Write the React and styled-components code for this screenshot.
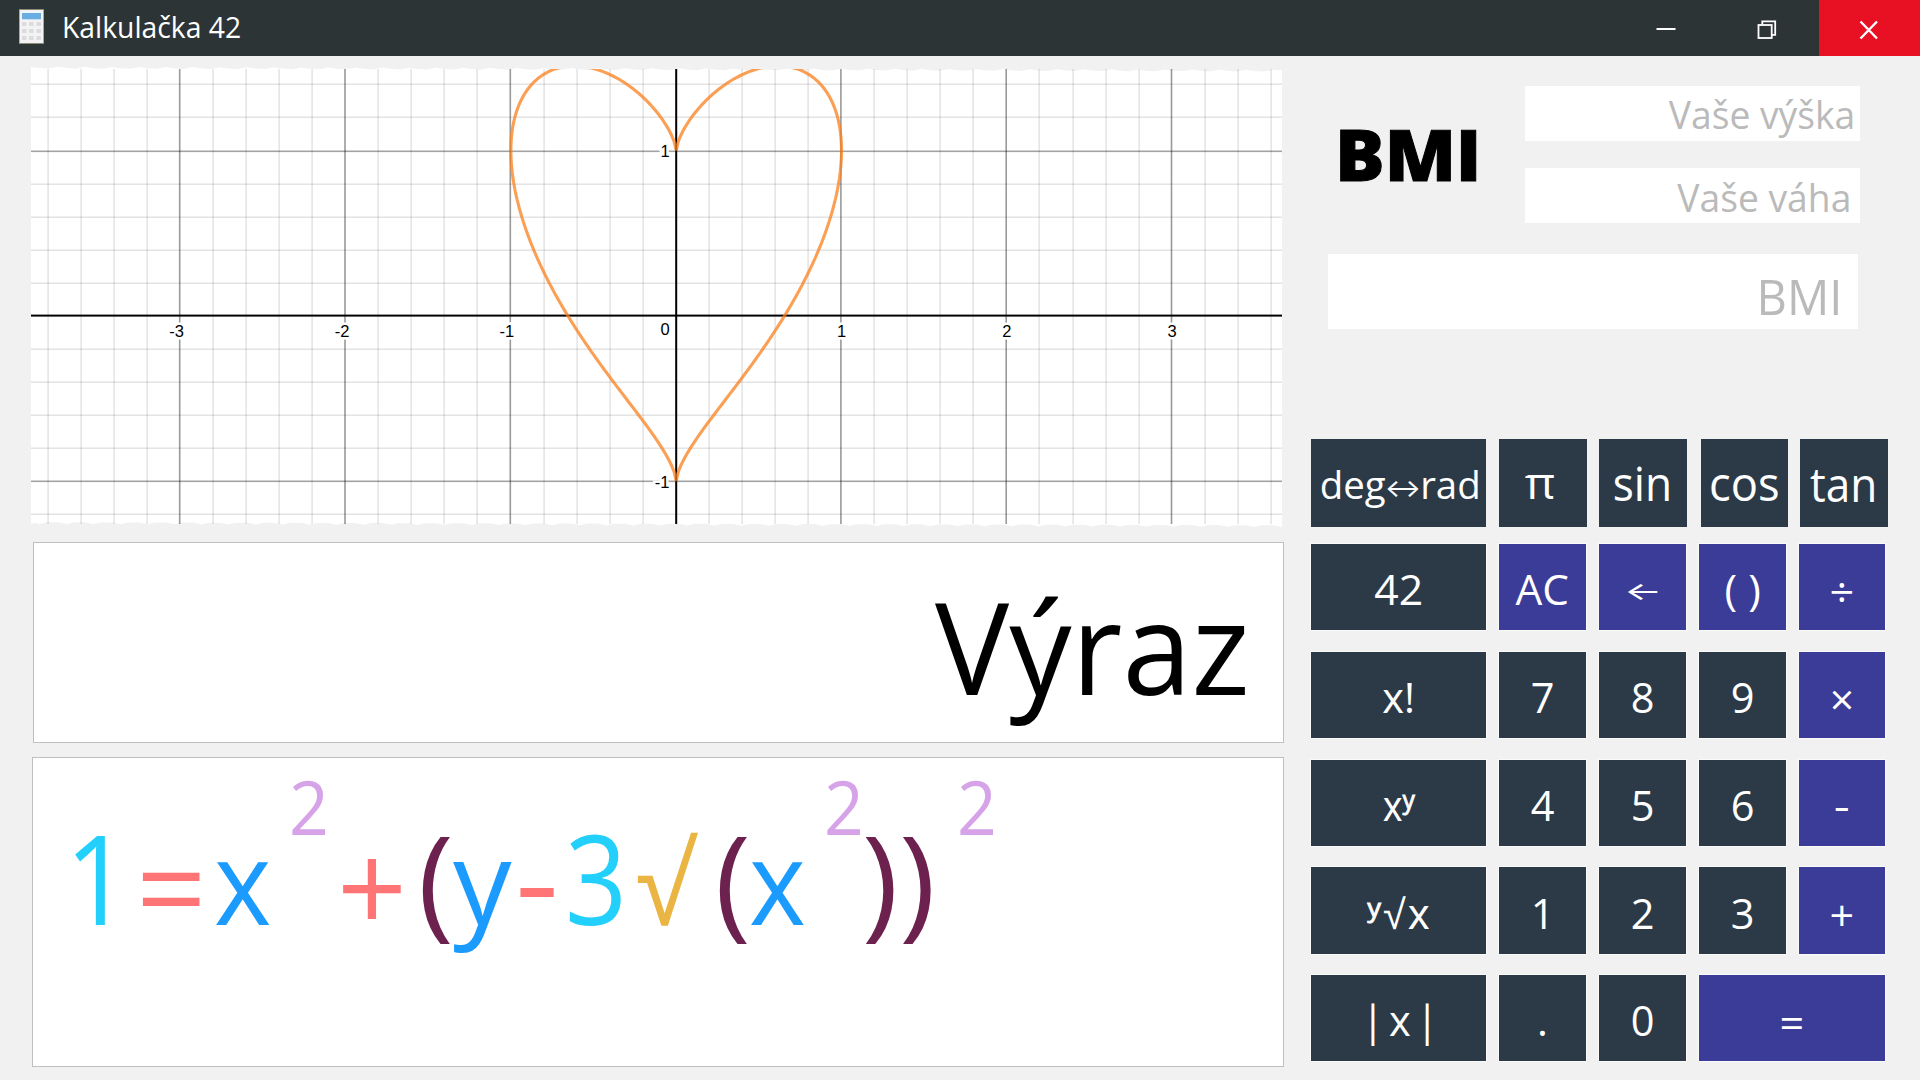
import React from "react";
import styled, { createGlobalStyle, css } from "styled-components";

const GlobalStyle = createGlobalStyle`
  * { box-sizing: border-box; }
  body {
    margin: 0;
    background: #f1f1f1;
    font-family: "Open Sans", "Noto Sans", sans-serif;
  }
`;

const Window = styled.div`
  width: 1920px;
  height: 1080px;
  display: flex;
  flex-direction: column;
  overflow: hidden;
  background: #f1f1f1;
`;

/* ---------- title bar ---------- */

const TitleBar = styled.header`
  flex: none;
  height: 56px;
  display: flex;
  align-items: stretch;
  background: #2d3436;
  color: #fff;
`;

const AppIcon = styled.svg`
  width: 26px;
  height: 36px;
  margin: 8px 16.5px 0 19px;
`;

const Title = styled.h1`
  margin: 0;
  flex: 1;
  font-size: 29px;
  font-weight: 400;
  line-height: 53px;
  white-space: nowrap;
  span {
    display: inline-block;
    transform: scaleX(0.976);
    transform-origin: left;
  }
`;

const WindowButton = styled.button`
  width: 101px;
  padding: 0;
  border: 0;
  display: grid;
  place-items: center;
  color: #fff;
  background: ${(p) => (p.$danger ? "#e81123" : "transparent")};

  svg {
    display: block;
    margin: 3px ${(p) => (p.$danger ? 1 : 3)}px 0 0;
  }
`;

/* ---------- layout ---------- */

const Body = styled.main`
  flex: 1;
  display: flex;
  align-items: flex-start;
  gap: 27px;
`;

const Workspace = styled.section`
  width: 1284px;
  padding: 10px 0 0 32px;
  display: flex;
  flex-direction: column;
  gap: 14px;
`;

const Panel = styled.aside`
  width: 577px;
  padding-top: 30px;
  display: flex;
  flex-direction: column;
`;

/* ---------- graph ---------- */

const GraphSvg = styled.svg`
  display: block;
  width: 1251px;
  height: 462px;
  margin-left: -1px;

  text {
    font-family: "Liberation Sans", Arial, sans-serif;
    font-size: 16.5px;
    fill: #000;
    stroke: #fff;
    stroke-width: 5px;
    paint-order: stroke;
  }
`;

/* ---------- displays ---------- */

const Display = styled.div`
  border: 1px solid #bfbfbf;
  background: #fff;
  display: flex;
  height: ${(p) => p.$height}px;
`;

const InputDisplay = styled(Display)`
  margin-left: 1px;
  padding: 39px 33px 0 0;
  justify-content: flex-end;
  align-items: flex-start;
`;

const InputText = styled.span`
  font-size: 128px;
  line-height: 128px;
  color: #000;
  transform: scaleX(0.972);
  transform-origin: right;
`;

const FormulaDisplay = styled(Display)`
  padding: 56px 0 0 31.5px;
  align-items: baseline;
`;

const tokenKinds = {
  number: css`color: #22d0fb; font-size: 125px;`,
  variable: css`color: #1c9bff; font-size: 118px;`,
  operator: css`color: #ff7575; font-size: 125px;`,
  paren: css`color: #6d214f; font-size: 123px;`,
  root: css`color: #eab543; font-size: 112px;`,
  power: css`color: #d6a2e8; font-size: 75px;`,
};

const Token = styled.span`
  flex: none;
  width: ${(p) => p.$width}px;
  line-height: 1;
  white-space: nowrap;
  ${(p) => tokenKinds[p.$kind]}
  transform: translateY(${(p) => p.$shift || 0}px) scaleX(${(p) => p.$stretch});
  transform-origin: left;
`;

/* ---------- BMI ---------- */

const BmiForm = styled.div`
  display: flex;
  justify-content: space-between;
  width: 549px;
  height: 137px;
`;

const BmiHeading = styled.h2`
  margin: 32px 0 0 23.5px;
  font-size: 71.4px;
  line-height: 72px;
  font-weight: 800;
  color: #000;
  transform: scaleX(1.032);
  transform-origin: left;
  -webkit-text-stroke: 1px #000;
`;

const BmiFields = styled.div`
  display: flex;
  flex-direction: column;
  gap: 27px;
`;

const Field = styled.div`
  width: 335px;
  height: 55px;
  padding-right: ${(p) => p.$inset}px;
  background: #fff;
  color: #bababa;
  font-size: 38.8px;
  line-height: 55px;
  text-align: right;
`;

const FieldText = styled.span`
  display: inline-block;
  transform: scaleX(0.96) translateY(${(p) => p.$shift || 0}px);
  transform-origin: right;
`;

const BmiResult = styled(Field)`
  width: 530px;
  height: 75px;
  margin: 31px 0 0 17px;
  font-size: 49px;
  line-height: 75px;
`;

/* ---------- keypad ---------- */

const FunctionRow = styled.div`
  margin-top: 110px;
  height: 88px;
  display: grid;
  grid-template-columns: 188px 100px 102px 99px 88px;
`;

const KeyGrid = styled.div`
  margin-top: 17px;
  display: grid;
  grid-template-columns: 175px 87px 87px 87px 86px;
  grid-auto-rows: 86.3px;
  column-gap: 13px;
  row-gap: 21.5px;
`;

const Key = styled.button`
  grid-column: span ${(p) => p.$span || 1};
  padding: 6px 0 0;
  border: 0;
  display: flex;
  justify-content: center;
  align-items: center;
  background: ${(p) => (p.$accent ? "#3b3b98" : "#2c3a47")};
  box-shadow: 0 0 0 1px #fafafa;
  color: #fff;
  font-family: inherit;
  font-size: 41.5px;
  line-height: 1.3;
  white-space: pre;
`;

const FunctionKey = styled(Key)`
  width: ${(p) => p.$width}px;
  padding-top: 2px;
  box-shadow: none;
  font-size: ${(p) => p.$size}px;
`;

const KeyLabel = styled.span`
  display: inline-block;
  transform: translate(${(p) => p.$x || 0}px, ${(p) => p.$y || 0}px)
    scaleX(${(p) => p.$stretch || 1});
  letter-spacing: ${(p) => p.$spacing || 0}px;
  font-family: ${(p) => p.$font || "inherit"};
`;

const Exponent = styled.span`
  -webkit-text-stroke: 0.8px #fff;
`;

const Arrow = styled.span`
  display: inline-flex;
  justify-content: center;
  width: ${(p) => p.$width}px;
  font-family: "Inter", sans-serif;
  font-weight: 400;
  font-size: ${(p) => p.$size}px;
  line-height: 1;
  transform: scaleX(${(p) => p.$stretch}) translateY(${(p) => p.$y || 0}px);
`;

/* ---------- data ---------- */

const formula = [
  ["1", "number", 71.3, 0.907],
  ["=", "operator", 78.6, 0.987, 7.5],
  ["x", "variable", 74.6, 0.93],
  ["2", "power", 47.8, 0.93, -90],
  ["+", "operator", 80.8, 0.98, 8],
  ["(", "paren", 35.4, 0.98],
  ["y", "variable", 62.3, 0.99],
  ["-", "operator", 49.6, 1.095, 1],
  ["3", "number", 71.1, 0.868],
  ["√", "root", 78.8, 0.935],
  ["(", "paren", 34.5, 0.98],
  ["x", "variable", 74.7, 0.92],
  ["2", "power", 38, 0.93, -90],
  [")", "paren", 37.4, 1],
  [")", "paren", 57.6, 1],
  ["2", "power", 40, 0.93, -90],
];

const keys = [
  { label: "42", stretch: 1.03 },
  { label: "AC", accent: true, stretch: 1.02 },
  { label: "←", accent: true, arrow: true, y: -5 },
  { label: "( )", accent: true, stretch: 1.03 },
  { label: "÷", accent: true, y: 1.5, stretch: 1.04 },
  { label: "x!" },
  { label: "7" },
  { label: "8" },
  { label: "9" },
  { label: "×", accent: true, y: 2, stretch: 1.03 },
  { label: "x", exponentAfter: "ʸ", stretch: 0.9, font: '"Noto Sans", sans-serif' },
  { label: "4" },
  { label: "5" },
  { label: "6" },
  { label: "-", accent: true, stretch: 1.2 },
  { label: "√x", exponentBefore: "ʸ", spacing: 2, x: 1, font: '"Noto Sans", sans-serif' },
  { label: "1" },
  { label: "2" },
  { label: "3" },
  { label: "+", accent: true, y: 1.5, stretch: 1.04 },
  { label: "| x |", spacing: -3 },
  { label: "." },
  { label: "0" },
  { label: "=", accent: true, span: 2, y: 1.5, stretch: 1.04 },
];

/* ---------- plot geometry ---------- */

const OX = 645.2;
const OY = 249.7;
const UX = 165.3;
const UY = 165.2;
const W = 1251;
const H = 462;

const px = (x) => OX + x * UX;
const py = (y) => OY - y * UY;

function paperOutline() {
  const step = 27;
  let d = "M0 1";
  for (let x = 0; x < W; x += step) {
    const base = 2 + (x / W) * 3;
    const end = Math.min(x + step, W);
    d += ` L${x + 8} ${base} L${end - 9} ${base + 0.6} L${end} ${base - 1.2}`;
  }
  d += ` L${W} 462`;
  for (let x = W; x > 0; x -= step) {
    const base = 457 + (x / W) * 3;
    const end = Math.max(x - step, 0);
    d += ` L${x} ${base + 1} L${x - 9} ${base - 0.8} L${end + 7} ${base - 0.8} L${end} ${base + 0.8}`;
  }
  return d + "Z";
}

function heartPath() {
  const n = 240;
  const upper = [];
  const lower = [];
  for (let i = 0; i <= n; i += 1) {
    const x = Math.sin(-Math.PI / 2 + (Math.PI * i) / n);
    const root = Math.cbrt(x * x);
    const arc = Math.sqrt(Math.max(0, 1 - x * x));
    upper.push(`${px(x).toFixed(2)} ${py(root + arc).toFixed(2)}`);
    lower.push(`${px(x).toFixed(2)} ${py(root - arc).toFixed(2)}`);
  }
  return `M${upper.join("L")}L${lower.reverse().join("L")}Z`;
}

const range = (from, to) =>
  Array.from({ length: to - from + 1 }, (_, i) => from + i);

function Graph() {
  return (
    <GraphSvg viewBox={`0 0 ${W} ${H}`}>
      <defs>
        <clipPath id="plot">
          <rect x="0" y="3" width={W} height="455" />
        </clipPath>
      </defs>
      <path d={paperOutline()} fill="#fff" />
      <g clipPath="url(#plot)">
        {range(-19, 18).filter((i) => i % 5).map((i) => (
          <rect
            key={`v${i}`}
            x={Math.round(px(i / 5) - 0.4) - 0.6}
            y="0"
            width="1.4"
            height={H}
            fill="#000"
            opacity="0.12"
          />
        ))}
        {range(-7, 7).filter((i) => i % 5).map((i) => (
          <rect
            key={`h${i}`}
            x="0"
            y={Math.round(py(i / 5)) - 0.5}
            width={W}
            height="1.4"
            fill="#000"
            opacity="0.12"
          />
        ))}
        {[-3, -2, -1, 1, 2, 3].map((i) => (
          <rect
            key={`m${i}`}
            x={px(i) - 1.4}
            y="0"
            width="1.6"
            height={H}
            fill="#000"
            opacity="0.4"
          />
        ))}
        {[-1, 1].map((i) => (
          <rect
            key={`n${i}`}
            x="0"
            y={Math.round(py(i)) - 0.5}
            width={W}
            height="1.6"
            fill="#000"
            opacity="0.36"
          />
        ))}
        <rect x="0" y="248.6" width={W} height="2" fill="#000" />
      </g>
      <g textAnchor="middle">
        <text x="145.7" y="271.3">-3</text>
        <text x="311" y="271.3">-2</text>
        <text x="475.8" y="271.3">-1</text>
        <text x="810.5" y="271.3">1</text>
        <text x="975.8" y="271.3">2</text>
        <text x="1141.2" y="271.3">3</text>
        <text x="634" y="269">0</text>
        <text x="634" y="91">1</text>
        <text x="631" y="422">-1</text>
      </g>
      <rect x="644.2" y="3" width="2" height="455" fill="#000" />
      <path
        d={heartPath()}
        clipPath="url(#plot)"
        fill="none"
        stroke="#fa7e19"
        strokeOpacity="0.74"
        strokeWidth="3.1"
        strokeLinejoin="bevel"
      />
    </GraphSvg>
  );
}

function CalculatorIcon() {
  return (
    <AppIcon viewBox="0 0 26 36">
      <rect x="0" y="1" width="25" height="35" fill="#8b8b76" />
      <rect x="0.7" y="2" width="23.6" height="33" fill="#f3f3f6" />
      <rect x="3" y="5" width="19" height="6.3" fill="#6aade0" />
      {[14, 21, 28].map((y) =>
        [3, 10, 17.5].map((x) => (
          <rect key={`${x}-${y}`} x={x} y={y} width="4.5" height="4" fill="#dcdcdc" />
        ))
      )}
    </AppIcon>
  );
}

export default function App() {
  return (
    <>
      <GlobalStyle />
      <Window>
        <TitleBar>
          <CalculatorIcon />
          <Title><span>Kalkulačka 42</span></Title>
          <WindowButton>
            <svg width="20" height="20" viewBox="0 0 20 20">
              <rect x="0.5" y="8" width="19" height="2" fill="#fff" />
            </svg>
          </WindowButton>
          <WindowButton>
            <svg width="20" height="20" viewBox="0 0 20 20" fill="none" stroke="#fff" strokeWidth="1.8">
              <path d="M5.3 4.5V1.4H18.2V14.8H15" />
              <rect x="1.5" y="5" width="13.2" height="13" />
            </svg>
          </WindowButton>
          <WindowButton $danger>
            <svg width="20" height="20" viewBox="0 0 20 20" fill="none" stroke="#fff" strokeWidth="2.4">
              <path d="M1.5 1.5L18 18.5M18 1.5L1.5 18.5" />
            </svg>
          </WindowButton>
        </TitleBar>

        <Body>
          <Workspace>
            <Graph />
            <InputDisplay $height={201}>
              <InputText>Výraz</InputText>
            </InputDisplay>
            <FormulaDisplay $height={310}>
              {formula.map(([text, kind, width, stretch, shift], i) => (
                <Token key={i} $kind={kind} $width={width} $stretch={stretch} $shift={shift}>
                  {text}
                </Token>
              ))}
            </FormulaDisplay>
          </Workspace>

          <Panel>
            <BmiForm>
              <BmiHeading>BMI</BmiHeading>
              <BmiFields>
                <Field $inset={5}>
                  <FieldText $shift={1}>Vaše výška</FieldText>
                </Field>
                <Field $inset={9}>
                  <FieldText $shift={2}>Vaše váha</FieldText>
                </Field>
              </BmiFields>
            </BmiForm>
            <BmiResult $inset={16}>
              <FieldText $shift={5}>BMI</FieldText>
            </BmiResult>

            <FunctionRow>
              <FunctionKey $width={175} $size={39}>
                <KeyLabel $x={1.5} $stretch={0.985}>
                  deg<Arrow $width={35} $size={25} $stretch={1.1} $y={-2}>↔</Arrow>rad
                </KeyLabel>
              </FunctionKey>
              <FunctionKey $width={88} $size={44.5}>
                <KeyLabel $x={-3.5} $y={-2} $stretch={1.05}>π</KeyLabel>
              </FunctionKey>
              <FunctionKey $width={88} $size={46.7}>
                <KeyLabel $x={-1} $y={-1} $stretch={0.947}>sin</KeyLabel>
              </FunctionKey>
              <FunctionKey $width={87} $size={46.7}>
                <KeyLabel $y={-1} $stretch={0.97}>cos</KeyLabel>
              </FunctionKey>
              <FunctionKey $width={88} $size={46.7}>
                <KeyLabel $stretch={0.945}>tan</KeyLabel>
              </FunctionKey>
            </FunctionRow>

            <KeyGrid>
              {keys.map((k, i) => (
                <Key key={i} $accent={k.accent} $span={k.span}>
                  <KeyLabel
                    $x={k.x}
                    $y={k.y}
                    $stretch={k.stretch}
                    $spacing={k.spacing}
                    $font={k.font}
                  >
                    {k.exponentBefore && <Exponent>{k.exponentBefore}</Exponent>}
                    {k.arrow ? (
                      <Arrow $width={40} $size={25} $stretch={1.6}>{k.label}</Arrow>
                    ) : (
                      k.label
                    )}
                    {k.exponentAfter && <Exponent>{k.exponentAfter}</Exponent>}
                  </KeyLabel>
                </Key>
              ))}
            </KeyGrid>
          </Panel>
        </Body>
      </Window>
    </>
  );
}
